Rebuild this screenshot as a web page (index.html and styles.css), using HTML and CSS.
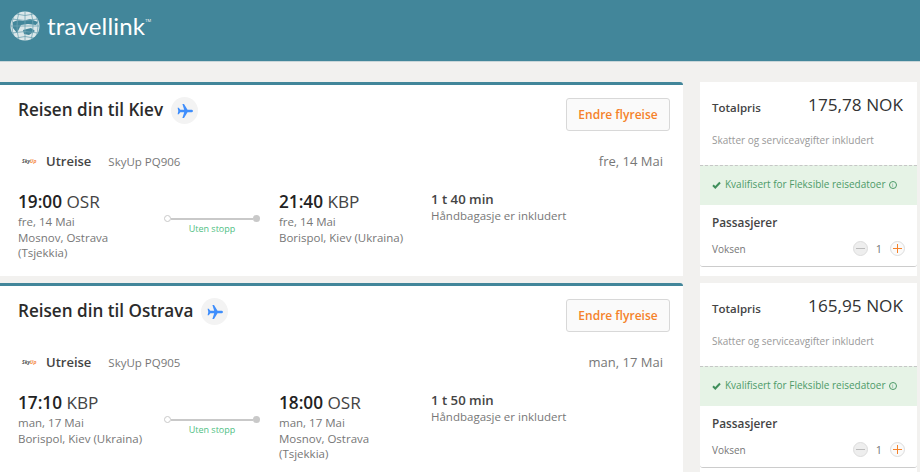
FILE: index.html
```html
<!DOCTYPE html>
<html>
<head>
<meta charset="utf-8">
<title>Travellink</title>
<link rel="stylesheet" href="styles.css">
</head>
<body>

<header class="topbar">
	<div class="logo">
		<svg class="globe" width="30" height="30" viewBox="0 0 30 30">
			<defs><clipPath id="ball"><circle cx="15" cy="15" r="14.500"/></clipPath></defs>
			<circle cx="15" cy="15" r="14.500" fill="#dce8ea"/>
			<g clip-path="url(#ball)">
				<path d="M3 11 Q8 8 13 10 L20 8 L28 11 L26 14 L18 13 L11 14 L9 18 L7 22 L3 17Z" fill="#42869a"/>
				<path d="M13 19 L21 17 L25 20 L19 24 L14 23Z" fill="#42869a"/>
				<g fill="none" stroke="#6fa3b2" stroke-width=".8">
					<path d="M15 0 V30 M9 1 Q5 15 9 29 M21 1 Q25 15 21 29 M4 4 Q0 15 4 26 M26 4 Q30 15 26 26"/>
					<path d="M0 15 H30 M2 8 Q15 11 28 8 M2 22 Q15 19 28 22 M6 3 Q15 6 24 3 M6 27 Q15 24 24 27"/>
				</g>
			</g>
		</svg>
		<span class="logoname">travellink</span><span class="tm">TM</span>
	</div>
</header>

<div class="page">
	<div class="trips">

		<section class="trip">
			<div class="triphead">
				<div class="triptitle">
					<h2>Reisen din til Kiev</h2>
					<span class="planebadge">
						<svg width="16" height="14" viewBox="0 0 16 14"><path d="M16 7c0-.8-1-1.300-2-1.300h-3.500L7 0H5.400l1.800 5.700H3.300L1.800 3.800H.6L1.300 7 .6 10.200h1.200l1.500-1.900h3.900L5.400 14H7l3.500-5.700H14c1 0 2-.5 2-1.300z" fill="#3f8efc"/></svg>
					</span>
				</div>
				<button class="changebtn">Endre flyreise</button>
			</div>
			<div class="legline">
				<div class="legleft">
					<span class="airline">Sky<span class="airline-up">Up</span></span>
					<span class="legname">Utreise</span>
					<span class="flightno">SkyUp PQ906</span>
				</div>
				<span class="legdate">fre, 14 Mai</span>
			</div>
			<div class="legbody">
				<div class="stop">
					<div class="time"><b>19:00</b> OSR</div>
					<div class="small">fre, 14 Mai</div>
					<div class="small">Mosnov, Ostrava<br>(Tsjekkia)</div>
				</div>
				<div class="route">
					<div class="routeline"><i class="dot-open"></i><i class="line"></i><i class="dot-full"></i></div>
					<div class="nostop">Uten stopp</div>
				</div>
				<div class="stop stop-arr">
					<div class="time"><b>21:40</b> KBP</div>
					<div class="small">fre, 14 Mai</div>
					<div class="small">Borispol, Kiev (Ukraina)</div>
				</div>
				<div class="duration">
					<div class="durtime">1 t 40 min</div>
					<div class="small">Håndbagasje er inkludert</div>
				</div>
			</div>
		</section>

		<section class="trip">
			<div class="triphead">
				<div class="triptitle">
					<h2>Reisen din til Ostrava</h2>
					<span class="planebadge">
						<svg width="16" height="14" viewBox="0 0 16 14"><path d="M16 7c0-.8-1-1.300-2-1.300h-3.500L7 0H5.400l1.800 5.700H3.300L1.800 3.800H.6L1.300 7 .6 10.200h1.200l1.500-1.900h3.900L5.400 14H7l3.500-5.700H14c1 0 2-.5 2-1.300z" fill="#3f8efc"/></svg>
					</span>
				</div>
				<button class="changebtn">Endre flyreise</button>
			</div>
			<div class="legline">
				<div class="legleft">
					<span class="airline">Sky<span class="airline-up">Up</span></span>
					<span class="legname">Utreise</span>
					<span class="flightno">SkyUp PQ905</span>
				</div>
				<span class="legdate">man, 17 Mai</span>
			</div>
			<div class="legbody">
				<div class="stop">
					<div class="time"><b>17:10</b> KBP</div>
					<div class="small">man, 17 Mai</div>
					<div class="small">Borispol, Kiev (Ukraina)</div>
				</div>
				<div class="route">
					<div class="routeline"><i class="dot-open"></i><i class="line"></i><i class="dot-full"></i></div>
					<div class="nostop">Uten stopp</div>
				</div>
				<div class="stop stop-arr">
					<div class="time"><b>18:00</b> OSR</div>
					<div class="small">man, 17 Mai</div>
					<div class="small">Mosnov, Ostrava<br>(Tsjekkia)</div>
				</div>
				<div class="duration">
					<div class="durtime">1 t 50 min</div>
					<div class="small">Håndbagasje er inkludert</div>
				</div>
			</div>
		</section>

	</div>

	<aside class="side">

		<div class="pricebox">
			<div class="pricecard">
				<div class="pricerow"><span class="pricelabel">Totalpris</span><span class="price">175,78 NOK</span></div>
				<div class="taxnote">Skatter og serviceavgifter inkludert</div>
			</div>
			<div class="flexnote">
				<svg class="check" width="9" height="8" viewBox="0 0 9 8"><path d="M1 4.200 3.300 6.500 8 1.500" fill="none" stroke="#3f8f5b" stroke-width="2"/></svg>
				<span>Kvalifisert for Fleksible reisedatoer</span>
				<span class="info">i</span>
			</div>
			<div class="paxcard">
				<div class="paxtitle">Passasjerer</div>
				<div class="paxrow">
					<span class="paxlabel">Voksen</span>
					<span class="stepper"><span class="circ minus"></span><span class="count">1</span><span class="circ plus"></span></span>
				</div>
			</div>
		</div>

		<div class="pricebox">
			<div class="pricecard">
				<div class="pricerow"><span class="pricelabel">Totalpris</span><span class="price">165,95 NOK</span></div>
				<div class="taxnote">Skatter og serviceavgifter inkludert</div>
			</div>
			<div class="flexnote">
				<svg class="check" width="9" height="8" viewBox="0 0 9 8"><path d="M1 4.200 3.300 6.500 8 1.500" fill="none" stroke="#3f8f5b" stroke-width="2"/></svg>
				<span>Kvalifisert for Fleksible reisedatoer</span>
				<span class="info">i</span>
			</div>
			<div class="paxcard">
				<div class="paxtitle">Passasjerer</div>
				<div class="paxrow">
					<span class="paxlabel">Voksen</span>
					<span class="stepper"><span class="circ minus"></span><span class="count">1</span><span class="circ plus"></span></span>
				</div>
			</div>
		</div>

	</aside>
</div>

</body>
</html>
```

FILE: styles.css
```css
html, body {
  margin: 0;
  height: 472px;
  overflow: hidden;
}
body {
  background: #f2f1ef;
  font-family: "Open Sans", sans-serif;
  color: #333;
}

.topbar {
  height: 62px;
  background: #42869a;
  border-bottom: 1px solid #c9d6d9;
  box-sizing: border-box;
  padding: 11px 0 0 10px;
}
.logo {
  display: flex;
  align-items: flex-start;
  color: #fff;
}
.globe {
  flex: none;
}
.logoname {
  font-family: "Lato", sans-serif;
  font-weight: 400;
  font-size: 24px;
  line-height: 30px;
  margin-left: 7px;
  letter-spacing: 0.2px;
}
.tm {
  font-size: 4px;
  line-height: 8px;
  margin-top: 6px;
}

.page {
  display: flex;
  padding-top: 20px;
}
.trips {
  width: 683px;
  flex: none;
}
.trip {
  height: 194px;
  box-sizing: border-box;
  background: #fff;
  border-top: 3px solid #42869a;
  border-top-right-radius: 3px;
  margin-bottom: 7px;
  padding: 0 13px 0 18px;
}

.triphead {
  display: flex;
  justify-content: space-between;
  padding-top: 13px;
  height: 46px;
}
.triptitle {
  display: flex;
  align-items: flex-start;
  margin-top: -1px;
}
.triptitle h2 {
  margin: 0;
  font-size: 17.1px;
  font-weight: 600;
  line-height: 26px;
  color: #2b2b2b;
}
.planebadge {
  width: 27px;
  height: 27px;
  margin-left: 8px;
  border-radius: 50%;
  background: #f3f3f3;
  display: flex;
  align-items: center;
  justify-content: center;
}
.changebtn {
  width: 104px;
  height: 33px;
  border: 1px solid #d8d8d8;
  border-radius: 3px;
  background: #fafafa;
  color: #f5822a;
  font-family: "Open Sans", sans-serif;
  font-size: 12px;
  font-weight: 600;
  padding: 0;
}

.legline {
  display: flex;
  justify-content: space-between;
  align-items: center;
  height: 24px;
  margin-top: 5px;
  padding-right: 7px;
}
.legleft {
  display: flex;
  align-items: center;
}
.airline {
  width: 20px;
  margin-left: 4px;
  font-size: 5px;
  font-weight: 700;
  font-style: italic;
  color: #555;
  flex: none;
}
.airline-up {
  color: #f58a4a;
}
.legname {
  margin-left: 4px;
  font-size: 13px;
  font-weight: 600;
  color: #444;
}
.flightno {
  margin-left: 17px;
  font-size: 11.5px;
  color: #777;
}
.legdate {
  font-size: 13px;
  color: #777;
}

.legbody {
  display: flex;
  margin-top: 16px;
}
.stop {
  width: 146px;
  flex: none;
}
.stop-arr {
  width: 152px;
  margin-left: -1px;
}
.time {
  font-size: 17.2px;
  line-height: 25px;
  color: #444;
}
.time b {
  font-weight: 600;
  color: #222;
}
.small {
  font-size: 11.5px;
  line-height: 15.5px;
  color: #777;
}
.route {
  width: 96px;
  margin-right: 20px;
  flex: none;
  text-align: center;
  padding-top: 26px;
}
.routeline {
  display: flex;
  align-items: center;
}
.dot-open {
  width: 7px;
  height: 7px;
  box-sizing: border-box;
  border: 1.5px solid #c9c9c9;
  border-radius: 50%;
}
.dot-full {
  width: 7px;
  height: 7px;
  border-radius: 50%;
  background: #c9c9c9;
}
.line {
  flex: 1;
  height: 2px;
  background: #c9c9c9;
}
.nostop {
  font-size: 9px;
  line-height: 14px;
  color: #4fc084;
}
.durtime {
  font-size: 13.2px;
  font-weight: 600;
  line-height: 20px;
  color: #444;
}
.duration .small {
  line-height: 14px;
}

.side {
  width: 217px;
  margin-left: 17px;
  flex: none;
}
.pricebox {
  height: 194px;
  margin-bottom: 7px;
  overflow: hidden;
  background: #fff;
}
.pricecard {
  height: 83px;
  box-sizing: border-box;
  background: #fff;
  border-radius: 3px 3px 0 0;
  padding: 9px 14px 0 12px;
}
.pricerow {
  display: flex;
  justify-content: space-between;
  align-items: center;
}
.pricelabel {
  font-size: 11.5px;
  font-weight: 600;
  margin-top: 4px;
  color: #444;
}
.price {
  font-size: 17.2px;
  line-height: 28px;
  font-weight: 400;
  color: #333;
}
.taxnote {
  margin-top: 14px;
  font-size: 10px;
  color: #999;
}
.flexnote {
  height: 40px;
  box-sizing: border-box;
  border-top: 1px dashed #c6c6c6;
  background: #e6f3e6;
  padding: 12px 0 0 12px;
  font-size: 10px;
  line-height: 13px;
  color: #4d9a68;
  display: flex;
  align-items: flex-start;
}
.check {
  margin: 3px 4px 0 0;
  flex: none;
}
.info {
  width: 8px;
  height: 8px;
  margin: 3px 0 0 3px;
  box-sizing: border-box;
  border: 1px solid #4d9a68;
  border-radius: 50%;
  font-size: 6px;
  line-height: 6px;
  text-align: center;
}
.paxcard {
  background: #fff;
  border-radius: 3px;
  height: 62px;
  padding: 9px 12px 0;
  box-sizing: border-box;
  border-bottom: 1px solid #ccc;
}
.paxtitle {
  font-size: 11.8px;
  font-weight: 600;
  line-height: 16px;
  color: #444;
}
.paxrow {
  display: flex;
  justify-content: space-between;
  align-items: center;
  margin-top: 11px;
}
.paxlabel {
  font-size: 10px;
  color: #777;
}
.stepper {
  display: flex;
  align-items: center;
}
.circ {
  width: 15px;
  height: 15px;
  box-sizing: border-box;
  border: 1px solid #ddd;
  border-radius: 50%;
}
.minus {
  background: linear-gradient(#bbb, #bbb) center / 9px 1px no-repeat, #eee;
}
.plus {
  background:
    linear-gradient(#f5822a, #f5822a) center / 9px 1px no-repeat,
    linear-gradient(#f5822a, #f5822a) center / 1px 9px no-repeat,
    #fafafa;
}
.count {
  font-size: 11px;
  color: #777;
  margin: 0 8px;
}
```
